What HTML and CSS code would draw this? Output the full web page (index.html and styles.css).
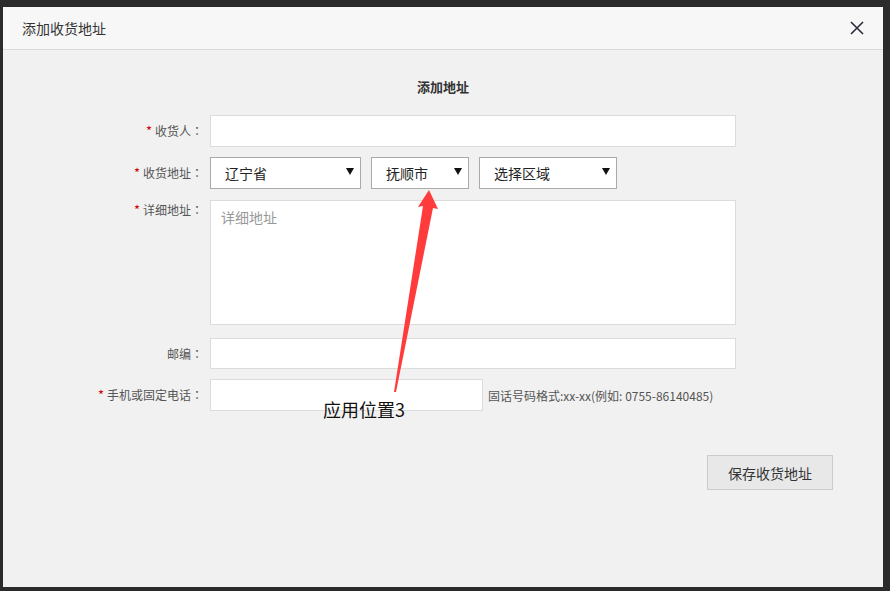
FILE: index.html
```html
<!DOCTYPE html>
<html lang="zh-CN">
  <head>
    <meta charset="UTF-8" />
    <meta name="viewport" content="width=device-width, initial-scale=1.0" />
    <title>添加收货地址</title>
    <link rel="stylesheet" href="styles.css">
  </head>
  <body>
    <div class="dialog">
      <div class="dialog-header">
        <span class="dialog-title">添加收货地址</span>
        <span class="close">
          <svg width="14" height="14" viewBox="0 0 14 14">
            <path d="M1 1 L13 13 M13 1 L1 13" stroke="#2c2c3a" stroke-width="1.6" fill="none" />
          </svg>
        </span>
      </div>
      <div class="dialog-body">
        <h3 class="form-title">添加地址</h3>
        <div class="form">
          <div class="row">
            <label class="label"><em>*</em>收货人<b lang="ja">：</b></label>
            <div class="input wide"></div>
          </div>
          <div class="row">
            <label class="label"><em>*</em>收货地址<b lang="ja">：</b></label>
            <div class="selects">
              <div class="select s1"><span>辽宁省</span><i class="arrow"></i></div>
              <div class="select s2"><span>抚顺市</span><i class="arrow"></i></div>
              <div class="select s3"><span>选择区域</span><i class="arrow"></i></div>
            </div>
          </div>
          <div class="row row-top">
            <label class="label"><em>*</em>详细地址<b lang="ja">：</b></label>
            <div class="input wide textarea"><span class="placeholder">详细地址</span></div>
          </div>
          <div class="row row-zip">
            <label class="label">邮编<b lang="ja">：</b></label>
            <div class="input wide zip"></div>
          </div>
          <div class="row">
            <label class="label"><em>*</em>手机或固定电话<b lang="ja">：</b></label>
            <div class="input phone"></div>
            <span class="hint">固话号码格式:xx-xx(例如: 0755-86140485)</span>
          </div>
        </div>
        <div class="actions">
          <button class="save">保存收货地址</button>
        </div>
      </div>

      <svg class="pointer" width="890" height="591" viewBox="0 0 890 591">
        <polygon points="429,190 438,209 433,208 396,392 394,392 423,206 418,207" fill="#ff3b3b" />
      </svg>
      <span class="note">应用位置3</span>
    </div>
  </body>
</html>
```

FILE: styles.css
```css
* {
  box-sizing: border-box;
}

body {
  margin: 0;
  background-color: #2b2b2b;
  font-family: "Noto Sans CJK SC", "Noto Sans", sans-serif;
  height: 591px;
  overflow: hidden;
}

.dialog {
  width: 880px;
  height: 580px;
  margin: 7px 0 0 3px;
  background-color: #f1f1f1;
  position: relative;
}

.dialog-header {
  height: 43px;
  background-color: #f7f7f7;
  border-bottom: 1px solid #d9d9d9;
  display: flex;
  align-items: center;
  justify-content: space-between;
  padding: 0 19px 0 19px;
}

.dialog-title {
  font-size: 14px;
  color: #333;
}

.close {
  display: flex;
  width: 14px;
  height: 14px;
}

.dialog-body {
  padding-top: 27px;
}

.form-title {
  margin: 0 0 18px;
  font-size: 13px;
  line-height: 20px;
  font-weight: bold;
  color: #333;
  text-align: center;
}

.form {
  display: flex;
  flex-direction: column;
  gap: 10px;
}

.row {
  display: flex;
  align-items: center;
}

.row-top {
  align-items: flex-start;
  margin-top: 1px;
}

.row-top .label {
  padding-top: 1px;
}

.row-zip {
  margin-top: 3px;
}

.label {
  width: 200px;
  margin-right: 7px;
  text-align: right;
  font-size: 12px;
  color: #555;
  line-height: 18px;
}

.label b {
  font-weight: normal;
  font-family: "Noto Sans CJK JP", sans-serif;
}

.label em {
  font-style: normal;
  font-size: 13px;
  color: #d40000;
  margin-right: 3px;
}

.input {
  height: 32px;
  background-color: #fff;
  border: 1px solid #dcdcdc;
}

.wide {
  width: 526px;
}

.zip {
  height: 31px;
}

.textarea {
  height: 125px;
  padding: 3px 10px;
}

.placeholder {
  font-size: 14px;
  color: #999;
}

.phone {
  width: 273px;
}

.hint {
  margin-left: 5px;
  font-size: 12px;
  color: #555;
}

.selects {
  display: flex;
  gap: 10px;
}

.select {
  height: 32px;
  background-color: #fff;
  border: 1px solid #aaa;
  display: flex;
  align-items: center;
  justify-content: space-between;
  padding: 0 6px 0 14px;
  font-size: 14px;
  color: #222;
}

.s1 {
  width: 151px;
}

.s2 {
  width: 98px;
}

.s3 {
  width: 138px;
}

.arrow {
  width: 0;
  height: 0;
  border-left: 4px solid transparent;
  border-right: 4px solid transparent;
  border-top: 7px solid #111;
  margin-bottom: 4px;
}

.actions {
  display: flex;
  justify-content: flex-end;
  padding-right: 50px;
  margin-top: 44px;
}

.save {
  width: 126px;
  height: 35px;
  background-color: #e8e8e8;
  border: 1px solid #ccc;
  font-family: inherit;
  font-size: 14px;
  color: #333;
}

.pointer {
  position: absolute;
  left: -3px;
  top: -7px;
}

.note {
  position: absolute;
  left: 320px;
  top: 389px;
  font-size: 18px;
  color: #111;
}
```
